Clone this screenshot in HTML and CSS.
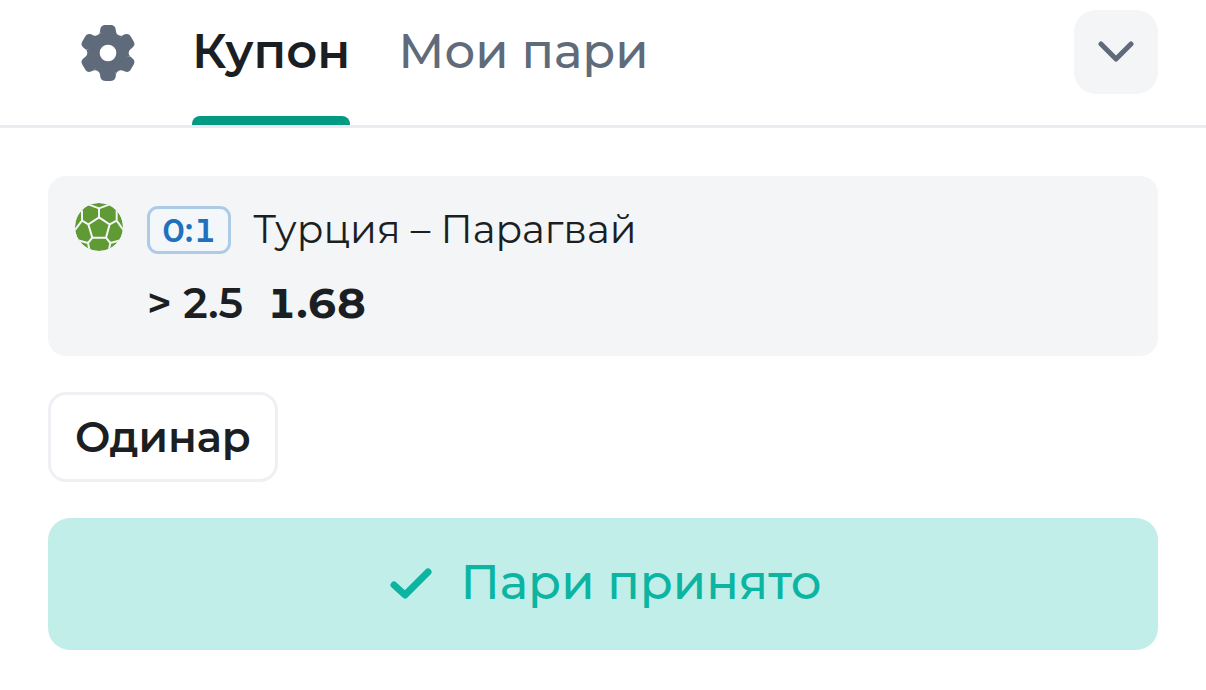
FILE: index.html
```html
<!DOCTYPE html>
<html lang="ru">
<head>
<meta charset="utf-8">
<meta name="viewport" content="width=device-width, initial-scale=1">
<title>Купон</title>
<link rel="stylesheet" href="styles.css">
</head>
<body>
<header class="header">
  <button class="settings" type="button" aria-label="Настройки">
    <svg class="gear" viewBox="-84 -84 168 168" aria-hidden="true">
      <defs><path id="tooth" d="M0 0L-24-64C-23-78-19-84-8-84H8C19-84 23-78 24-64Q25-57 31-53.700Q37-50 43.400-52.800Z"/></defs>
      <circle r="59"/>
      <use href="#tooth"/>
      <use href="#tooth" transform="rotate(60)"/>
      <use href="#tooth" transform="rotate(120)"/>
      <use href="#tooth" transform="rotate(180)"/>
      <use href="#tooth" transform="rotate(240)"/>
      <use href="#tooth" transform="rotate(300)"/>
      <circle class="gear-hole" r="25"/>
    </svg>
  </button>
  <nav class="tabs">
    <a class="tab tab-active" href="#coupon">Купон</a>
    <a class="tab" href="#bets">Мои пари</a>
  </nav>
  <button class="toggle" type="button" aria-label="Свернуть">
    <svg class="chevron" viewBox="0 0 36 22" aria-hidden="true"><path d="M3 3L18 18 33 3"/></svg>
  </button>
</header>
<main class="coupon">
  <section class="bet">
    <svg class="ball" viewBox="0 0 144 144" aria-hidden="true">
      <defs><clipPath id="round"><circle cx="72" cy="72" r="72"/></clipPath></defs>
      <g clip-path="url(#round)">
        <circle class="ball-fill" cx="72" cy="72" r="72"/>
        <path class="ball-seams" d="M72 43L104 64 93 104H52L40 64ZM72 43V16M72 16L42 5M72 16L102 5M40 64L21 53M21 53V22M21 53L-1 82M104 64L125 53M125 53V22M125 53L146 82M52 104L39 120M39 120L8 112M39 120L44 144M93 104L106 120M106 120L137 112M106 120L101 144"/>
      </g>
    </svg>
    <div class="bet-info">
      <div class="match"><span class="score">0:1</span><span class="teams">Турция – Парагвай</span></div>
      <div class="outcome"><span class="pick">&gt; 2.5</span><strong class="odds">1.68</strong></div>
    </div>
  </section>
  <button class="kind" type="button">Одинар</button>
  <button class="accepted" type="button">
    <svg class="check" viewBox="0 0 42 32" aria-hidden="true"><path d="M4 17L15 27 38 4"/></svg>
    <span class="accepted-text">Пари принято</span>
  </button>
</main>
</body>
</html>
```
FILE: styles.css
```css
* { box-sizing: border-box; }
body {
  margin: 0;
  background: #fff;
  color: #1b1f23;
  font-family: Montserrat, Inter, sans-serif;
}
button { font: inherit; color: inherit; border: 0; padding: 0; cursor: pointer; }
svg { display: block; flex: none; }
.header {
  display: flex;
  align-items: flex-start;
  height: 128px;
  padding: 0 48px 0 80px;
  border-bottom: 3px solid #e9ebf0;
}
.settings { margin: 25px 56px 0 0; background: none; }
.gear { width: 56px; height: 56px; fill: #5f6b7a; }
.gear-hole { fill: #fff; }
.tabs { display: flex; gap: 48px; height: 100%; }
.tab {
  display: flex;
  flex-direction: column;
  justify-content: space-between;
  font-size: 48px;
  font-weight: 500;
  line-height: 102px;
  color: #5f6b7a;
  text-decoration: none;
  white-space: nowrap;
}
.tab-active { font-weight: 600; color: #1b1f23; }
.tab-active::after {
  content: "";
  height: 9px;
  border-radius: 8px 8px 0 0;
  background: #039a83;
}
.toggle {
  display: grid;
  place-items: center;
  width: 84px;
  height: 84px;
  margin: 10px 0 0 auto;
  border-radius: 22px;
  background: #f3f5f7;
}
.chevron { width: 36px; height: 22px; }
.chevron path, .check path { fill: none; stroke-linecap: round; stroke-linejoin: round; }
.chevron path { stroke: #5f6b7a; stroke-width: 5; }
.coupon {
  display: flex;
  flex-direction: column;
  align-items: flex-start;
  gap: 36px;
  padding: 48px;
}
.bet {
  display: flex;
  gap: 24px;
  align-self: stretch;
  padding: 27px 27px 25px;
  border-radius: 18px;
  background: #f3f5f7;
}
.ball { width: 48px; height: 48px; }
.ball-fill { fill: #5f9a35; }
.ball-seams { fill: none; stroke: #f3f5f7; stroke-width: 6; }
.match { display: flex; align-items: center; gap: 22px; height: 54px; }
.score {
  padding: 0 12px;
  border: 3px solid #aecbe6;
  border-radius: 11px;
  background: #f3f7fa;
  color: #1f71bd;
  font-size: 33px;
  font-weight: 600;
  font-variant-numeric: tabular-nums;
  line-height: 42px;
}
.teams { padding-bottom: 2px; font-size: 39px; line-height: 48px; }
.outcome {
  display: flex;
  gap: 24px;
  margin-top: 18px;
  font-size: 42px;
  font-weight: 600;
  line-height: 56px;
}
.odds { font-weight: 700; font-variant-numeric: tabular-nums; }
.kind {
  height: 90px;
  padding: 0 24px;
  border: 3px solid #eff0f3;
  border-radius: 18px;
  background: #fff;
  font-size: 42px;
  font-weight: 600;
}
.accepted {
  display: flex;
  align-items: center;
  justify-content: center;
  gap: 28px;
  align-self: stretch;
  height: 132px;
  padding-left: 6px;
  border-radius: 22px;
  background: #c2eee9;
  color: #0bb5a2;
  font-size: 48px;
  font-weight: 500;
}
.check { width: 42px; height: 32px; }
.check path { stroke: currentColor; stroke-width: 7; }
.accepted-text { padding-bottom: 4px; }
```
